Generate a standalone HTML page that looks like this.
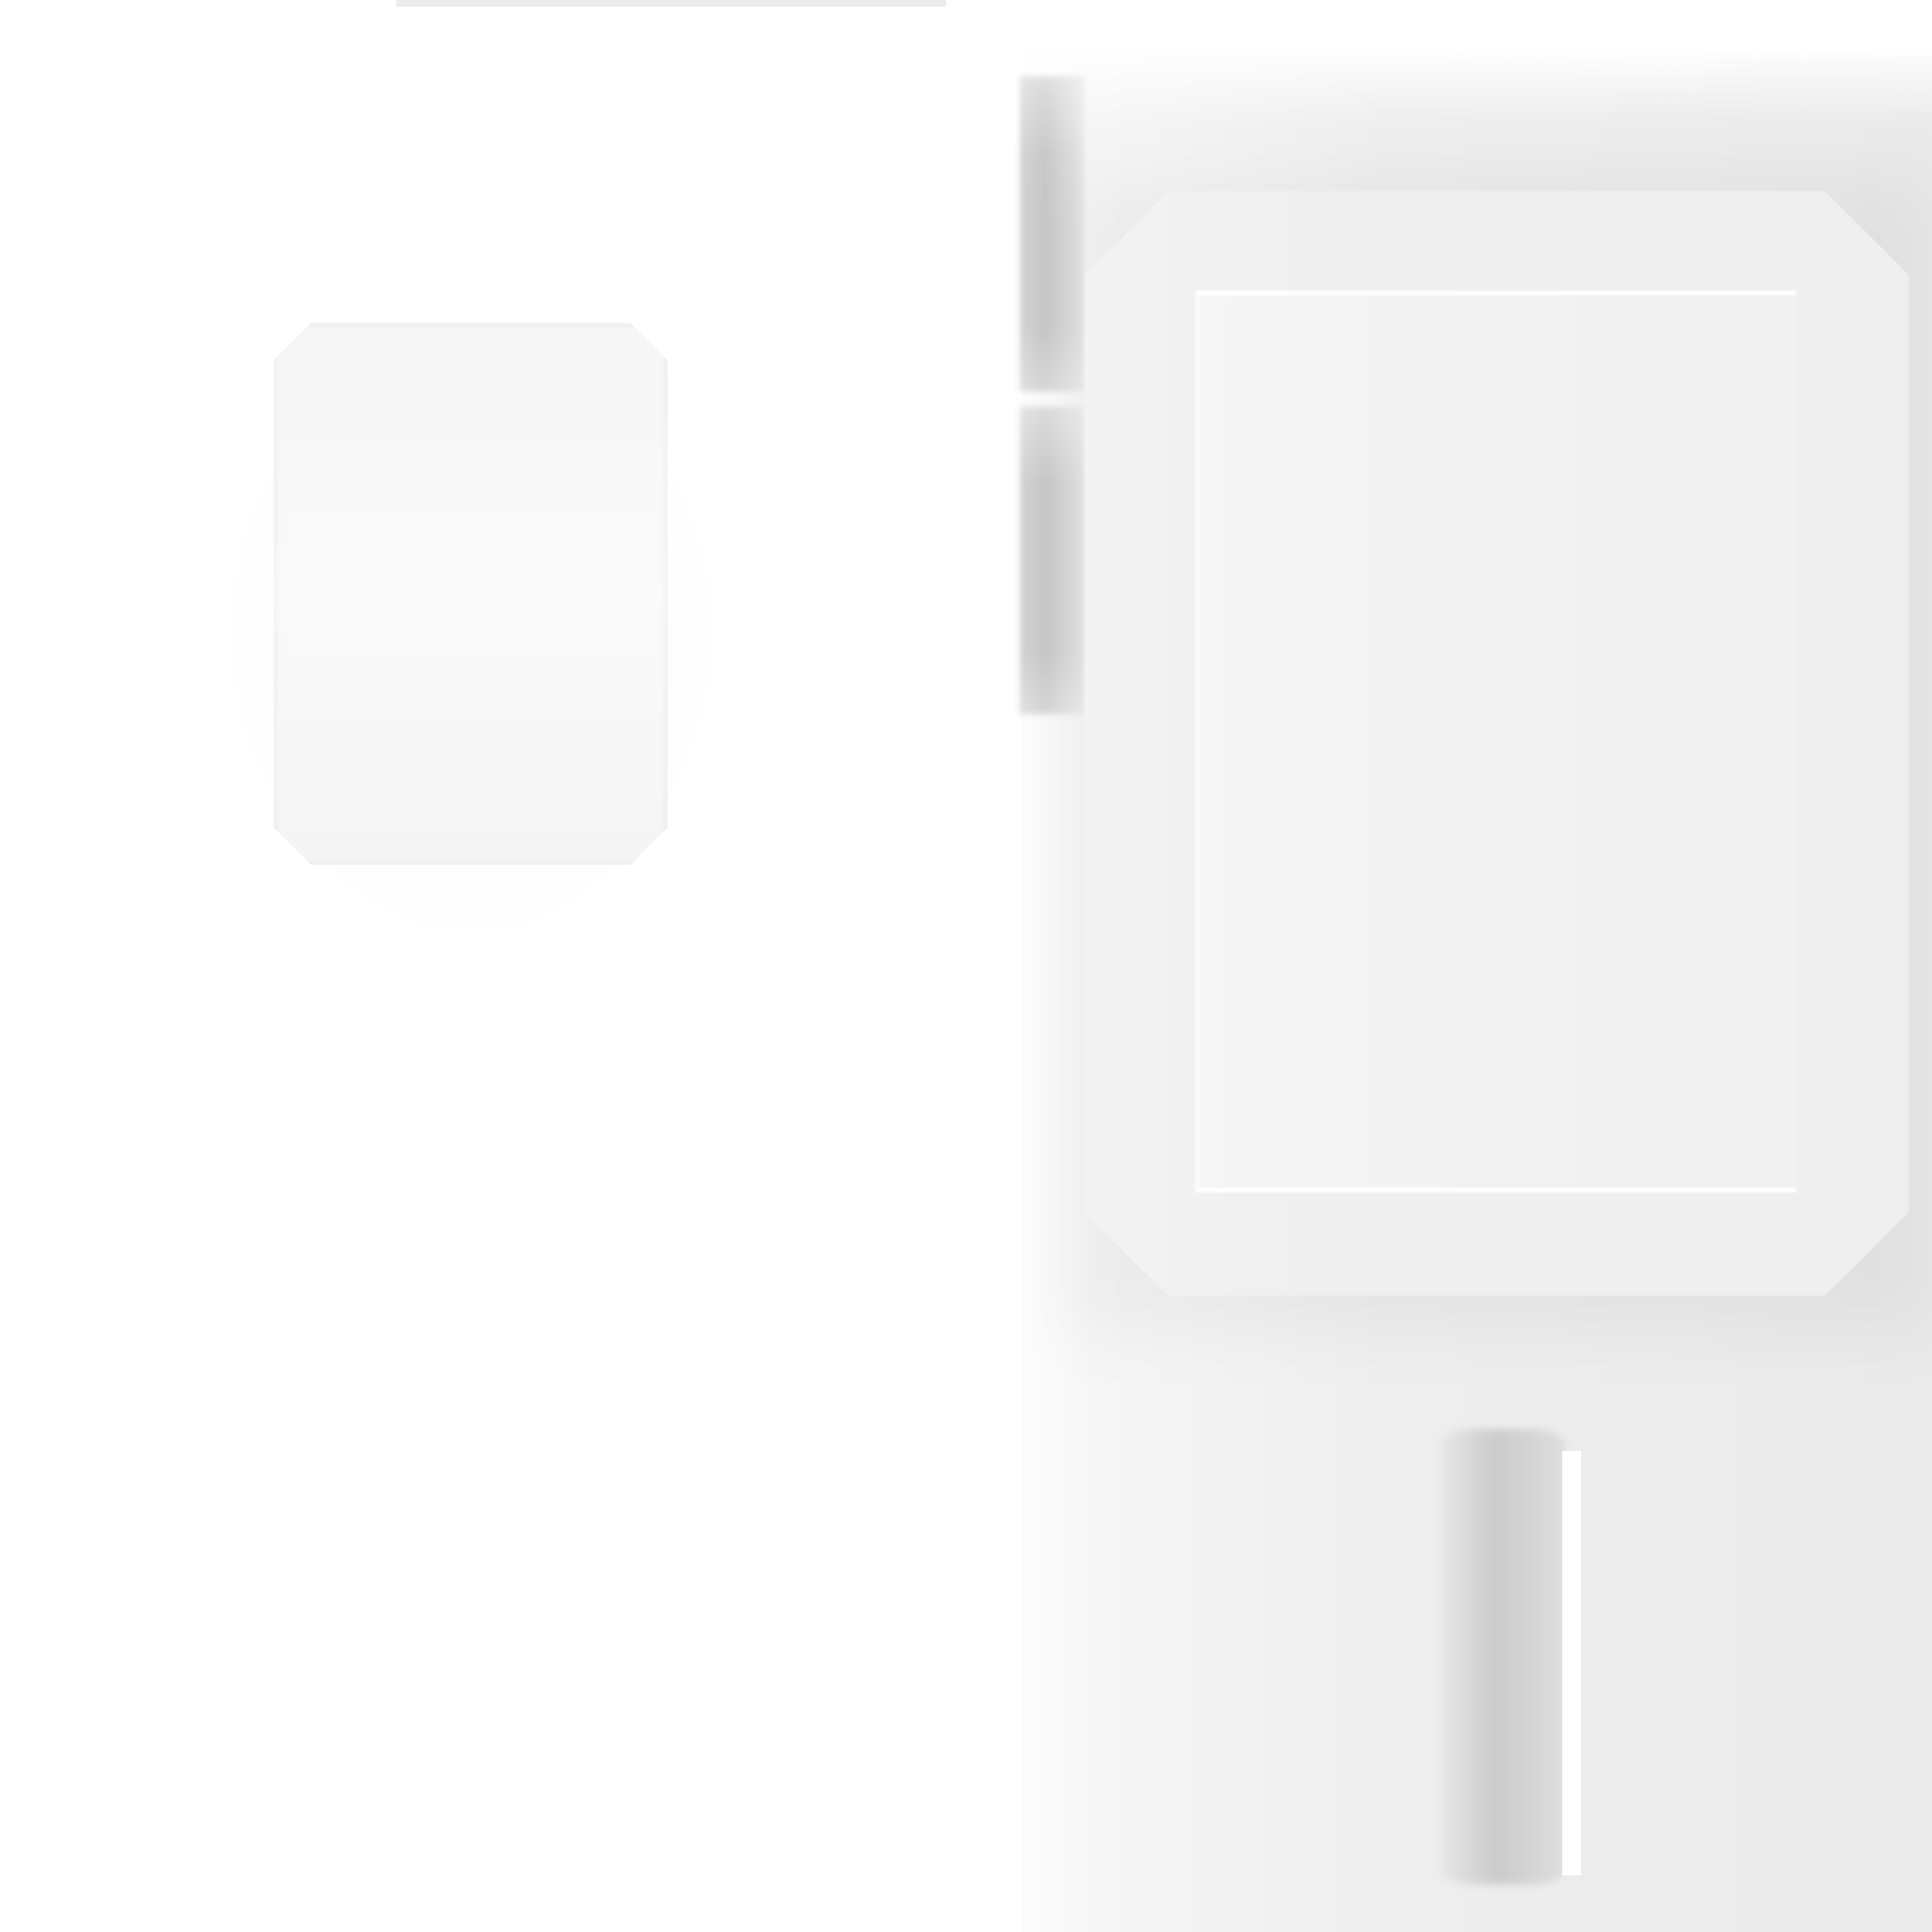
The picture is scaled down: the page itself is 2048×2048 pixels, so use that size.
<!DOCTYPE html>
<html><head><meta charset="utf-8"><style>
html,body{margin:0;padding:0;width:2048px;height:2048px;overflow:hidden;background:#fff;font-family:"Liberation Sans",sans-serif}
.abs{position:absolute}
#right{left:1084px;top:0;width:964px;height:2048px;background:linear-gradient(90deg,#f8f8f8 0%,#eeeeee 40%,#eaeaea 100%)}
#rightTop{left:1084px;top:0;width:964px;height:130px;background:linear-gradient(180deg,#fff 0%,#fff 36%,rgba(255,255,255,0) 100%)}
#rightfade{left:1040px;top:0;width:120px;height:2048px;background:linear-gradient(90deg,#fff,rgba(255,255,255,0));}
#topline{left:420px;top:0;width:583px;height:7px;background:#ececec}
.chamf{clip-path:polygon(40px 0,calc(100% - 40px) 0,100% 40px,100% calc(100% - 40px),calc(100% - 40px) 100%,40px 100%,0 calc(100% - 40px),0 40px)}
#smallshadow{left:240px;top:340px;width:520px;height:660px;background:radial-gradient(ellipse at center,rgba(0,0,0,0.04),rgba(0,0,0,0) 70%);filter:blur(30px)}
#small{left:290px;top:342px;width:418px;height:575px;background:linear-gradient(180deg,#f6f6f6,#fafafa 50%,#f5f5f5);box-shadow:inset 0 0 8px rgba(0,0,0,0.10);filter:blur(1.5px)}
.bar{filter:blur(3px)}
#bar1{left:1081px;top:81px;width:68px;height:334px;background:linear-gradient(180deg,rgba(255,255,255,0.4),rgba(255,255,255,0) 25%,rgba(255,255,255,0) 80%,rgba(255,255,255,0.3)),linear-gradient(90deg,#d4d4d4,#c8c8c8 40%,#e6e6e6)}
#bar2{left:1081px;top:431px;width:68px;height:326px;background:linear-gradient(180deg,rgba(255,255,255,0.4),rgba(255,255,255,0) 25%,rgba(255,255,255,0) 80%,rgba(255,255,255,0.3)),linear-gradient(90deg,#d4d4d4,#c8c8c8 40%,#e6e6e6)}
#bigshadow{left:1130px;top:190px;width:920px;height:1220px;background:rgba(0,0,0,0.04);filter:blur(35px)}
#big{left:1149px;top:202px;width:875px;height:1172px;background:linear-gradient(90deg,#f3f3f3,#efefef 30%,#efefef);filter:blur(2px)}
#inner{left:1267px;top:308px;width:637px;height:956px;background:linear-gradient(90deg,#f6f6f6,#f2f2f2 50%,#f1f1f1);border-top:5px solid #fff;border-bottom:5px solid #fff;border-left:4px solid #fbfbfb;box-sizing:border-box;filter:blur(1px)}
#bb{left:1528px;top:1515px;width:131px;height:483px;background:linear-gradient(90deg,#e6e6e6,#cbcbcb 45%,#dedede);filter:blur(4px);border-radius:40px/14px}
#bbline{left:1656px;top:1538px;width:20px;height:450px;background:#fff}
</style></head><body>
<div class="abs" id="right"></div>
<div class="abs" id="rightTop"></div>
<div class="abs" id="rightfade"></div>
<div class="abs" id="topline"></div>
<div class="abs" id="smallshadow"></div>
<div class="abs chamf" id="small"></div>
<div class="abs bar" id="bar1"></div>
<div class="abs bar" id="bar2"></div>
<div class="abs" id="bigshadow"></div>
<div class="abs" id="big" style="clip-path:polygon(90px 0,calc(100% - 90px) 0,100% 90px,100% calc(100% - 90px),calc(100% - 90px) 100%,90px 100%,0 calc(100% - 90px),0 90px)"></div>
<div class="abs" id="inner"></div>
<div class="abs" id="bb"></div>
<div class="abs" id="bbline"></div>
</body></html>
